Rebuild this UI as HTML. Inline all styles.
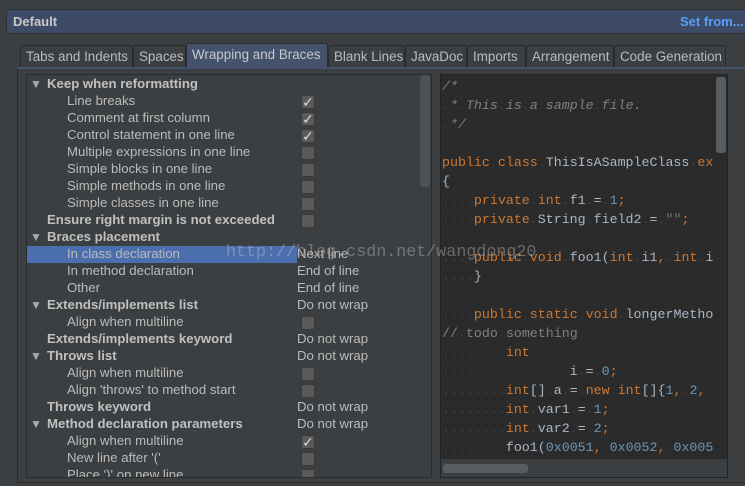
<!DOCTYPE html>
<html><head><meta charset="utf-8"><style>
*{margin:0;padding:0;box-sizing:border-box}
body{width:745px;height:486px;background:#3c3f41;position:relative;overflow:hidden;font-family:"Liberation Sans","DejaVu Sans",sans-serif;font-size:13.2px;color:#bbbbbb}
.hdr{position:absolute;left:6px;top:9px;width:745px;height:25px;background:#3d4b66;border:1px solid #2f2f2f;border-radius:4px 0 0 4px}
.hdr b{position:absolute;left:6px;top:4px;font-size:13px;color:#c8c8c8}
.hdr .sf{position:absolute;left:673px;top:4px;font-weight:bold;font-size:13px;color:#589df6}
.tab{position:absolute;top:45px;height:23px;background:#3c3f41;border:1px solid #2b2b2b;border-bottom:none;border-radius:3px 3px 0 0;font-size:13.4px;color:#bbb;padding:3px 0 0 5px;white-space:nowrap}
.tab.sel{background:#44526d;top:43px;height:25px;color:#c8c8c8}
.panel{position:absolute;left:17px;top:67px;width:740px;height:416px;border:1px solid #2b2b2b;border-top:2px solid #44526d}
.tree{position:absolute;left:26px;top:74px;width:406px;height:404px;border:1px solid #2b2b2b;overflow:hidden}
.row{position:absolute;left:0;height:17px;width:406px;white-space:nowrap}
.row span{position:absolute;top:0px}
.row .t{left:20px;font-weight:bold;color:#c0c0c0}
.row .n{left:40px}
.row .v{left:270px}
.row .arr{left:3px;font-size:12px;top:1px;color:#aaa}
.cb{position:absolute;left:274px;top:2px;width:14px;height:14px;background:#5a5a5a;border:1px solid #3a3a3a;border-radius:2px;color:#ddd;font-size:14px;line-height:12px;text-align:center}
.vs{position:absolute;left:420px;top:75px;width:10px;height:112px;background:#4f5255;border-radius:4px}
.code{position:absolute;left:440px;top:74px;width:288px;height:404px;background:#2b2b2b;border:1px solid #232323;overflow:hidden;font-family:"Liberation Mono",monospace;font-size:13.3px;color:#a9b7c6}
.ln{position:absolute;left:1px;white-space:pre;height:19px;line-height:19px}
.k{color:#cc7832}.c{color:#808080;font-style:italic}.g{color:#808080}.num{color:#6897bb}.s{color:#6a8759}.d{color:#3e3e3e}
.cvs{position:absolute;left:275px;top:2px;width:10px;height:76px;background:#5a5d60;border-radius:3px}
.chs{position:absolute;left:2px;top:389px;width:85px;height:9px;background:#5a5d60;border-radius:3px}
.cbot{position:absolute;left:0;top:384px;width:288px;height:20px;background:#3c3f41}
.wm{position:absolute;left:226px;top:243px;font-family:"Liberation Mono",monospace;font-size:16.7px;color:rgba(200,200,200,0.4);white-space:nowrap}
.selrow{background:#4b6eaf}
</style></head><body>
<div class="hdr"><b>Default</b><span class="sf">Set from...</span></div>
<div class="tab" style="left:20px;width:113px">Tabs and Indents</div>
<div class="tab" style="left:133px;width:53px">Spaces</div>
<div class="tab sel" style="left:186px;width:142px">Wrapping and Braces</div>
<div class="tab" style="left:328px;width:77px">Blank Lines</div>
<div class="tab" style="left:405px;width:62px">JavaDoc</div>
<div class="tab" style="left:467px;width:59px">Imports</div>
<div class="tab" style="left:526px;width:88px">Arrangement</div>
<div class="tab" style="left:614px;width:112px">Code Generation</div>
<div class="panel"></div>
<div class="tree">
<div class="row" style="top:1px"><span class="arr">▼</span><span class="t">Keep when reformatting</span></div>
<div class="row" style="top:18px"><span class="n">Line breaks</span><div class="cb">✓</div></div>
<div class="row" style="top:35px"><span class="n">Comment at first column</span><div class="cb">✓</div></div>
<div class="row" style="top:52px"><span class="n">Control statement in one line</span><div class="cb">✓</div></div>
<div class="row" style="top:69px"><span class="n">Multiple expressions in one line</span><div class="cb"></div></div>
<div class="row" style="top:86px"><span class="n">Simple blocks in one line</span><div class="cb"></div></div>
<div class="row" style="top:103px"><span class="n">Simple methods in one line</span><div class="cb"></div></div>
<div class="row" style="top:120px"><span class="n">Simple classes in one line</span><div class="cb"></div></div>
<div class="row" style="top:137px"><span class="t">Ensure right margin is not exceeded</span><div class="cb"></div></div>
<div class="row" style="top:154px"><span class="arr">▼</span><span class="t">Braces placement</span></div>
<div class="row" style="top:171px"><div class="selrow" style="position:absolute;left:0;top:0;width:270px;height:17px"></div><span class="n">In class declaration</span><span class="v">Next line</span></div>
<div class="row" style="top:188px"><span class="n">In method declaration</span><span class="v">End of line</span></div>
<div class="row" style="top:205px"><span class="n">Other</span><span class="v">End of line</span></div>
<div class="row" style="top:222px"><span class="arr">▼</span><span class="t">Extends/implements list</span><span class="v">Do not wrap</span></div>
<div class="row" style="top:239px"><span class="n">Align when multiline</span><div class="cb"></div></div>
<div class="row" style="top:256px"><span class="t">Extends/implements keyword</span><span class="v">Do not wrap</span></div>
<div class="row" style="top:273px"><span class="arr">▼</span><span class="t">Throws list</span><span class="v">Do not wrap</span></div>
<div class="row" style="top:290px"><span class="n">Align when multiline</span><div class="cb"></div></div>
<div class="row" style="top:307px"><span class="n">Align 'throws' to method start</span><div class="cb"></div></div>
<div class="row" style="top:324px"><span class="t">Throws keyword</span><span class="v">Do not wrap</span></div>
<div class="row" style="top:341px"><span class="arr">▼</span><span class="t">Method declaration parameters</span><span class="v">Do not wrap</span></div>
<div class="row" style="top:358px"><span class="n">Align when multiline</span><div class="cb">✓</div></div>
<div class="row" style="top:375px"><span class="n">New line after '('</span><div class="cb"></div></div>
<div class="row" style="top:392px"><span class="n">Place ')' on new line</span><div class="cb"></div></div>
</div>
<div class="vs"></div>
<div class="code">
<div class="ln c" style="top:2px">/*</div>
<div class="ln c" style="top:21px"><span class="d">.</span>*<span class="d">.</span>This<span class="d">.</span>is<span class="d">.</span>a<span class="d">.</span>sample<span class="d">.</span>file.</div>
<div class="ln c" style="top:40px"><span class="d">.</span>*/</div>
<div class="ln" style="top:78px"><span class="k">public</span><span class="d">.</span><span class="k">class</span><span class="d">.</span>ThisIsASampleClass<span class="d">.</span><span class="k">ex</span></div>
<div class="ln" style="top:97px">{</div>
<div class="ln" style="top:116px"><span class="d">....</span><span class="k">private</span><span class="d">.</span><span class="k">int</span><span class="d">.</span>f1<span class="d">.</span>=<span class="d">.</span><span class="num">1</span><span class="k">;</span></div>
<div class="ln" style="top:135px"><span class="d">....</span><span class="k">private</span><span class="d">.</span>String<span class="d">.</span>field2<span class="d">.</span>=<span class="d">.</span><span class="s">""</span><span class="k">;</span></div>
<div class="ln" style="top:173px"><span class="d">....</span><span class="k">public</span><span class="d">.</span><span class="k">void</span><span class="d">.</span>foo1(<span class="k">int</span><span class="d">.</span>i1<span class="k">,</span><span class="d">.</span><span class="k">int</span><span class="d">.</span>i</div>
<div class="ln" style="top:192px"><span class="d">....</span>}</div>
<div class="ln" style="top:230px"><span class="d">....</span><span class="k">public</span><span class="d">.</span><span class="k">static</span><span class="d">.</span><span class="k">void</span><span class="d">.</span>longerMetho</div>
<div class="ln g" style="top:249px">//<span class="d">.</span>todo<span class="d">.</span>something</div>
<div class="ln" style="top:268px"><span class="d">........</span><span class="k">int</span></div>
<div class="ln" style="top:287px"><span class="d">................</span>i<span class="d">.</span>=<span class="d">.</span><span class="num">0</span><span class="k">;</span></div>
<div class="ln" style="top:306px"><span class="d">........</span><span class="k">int</span>[]<span class="d">.</span>a<span class="d">.</span>=<span class="d">.</span><span class="k">new</span><span class="d">.</span><span class="k">int</span>[]{<span class="num">1</span><span class="k">,</span><span class="d">.</span><span class="num">2</span><span class="k">,</span></div>
<div class="ln" style="top:325px"><span class="d">........</span><span class="k">int</span><span class="d">.</span>var1<span class="d">.</span>=<span class="d">.</span><span class="num">1</span><span class="k">;</span></div>
<div class="ln" style="top:344px"><span class="d">........</span><span class="k">int</span><span class="d">.</span>var2<span class="d">.</span>=<span class="d">.</span><span class="num">2</span><span class="k">;</span></div>
<div class="ln" style="top:363px"><span class="d">........</span>foo1(<span class="num">0x0051</span><span class="k">,</span><span class="d">.</span><span class="num">0x0052</span><span class="k">,</span><span class="d">.</span><span class="num">0x005</span></div>
<div class="cbot"></div>
<div class="cvs"></div>
<div class="chs"></div>
</div>
<div class="wm">http://blog.csdn.net/wangdong20</div>
</body></html>
